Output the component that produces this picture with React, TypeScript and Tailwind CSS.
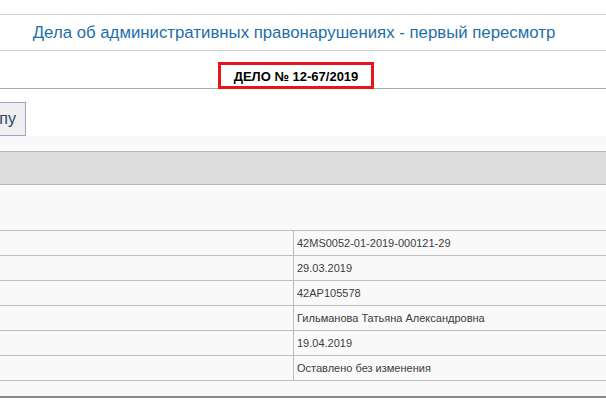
import React from "react";

const rows = [
  "42MS0052-01-2019-000121-29",
  "29.03.2019",
  "42AP105578",
  "Гильманова Татьяна Александровна",
  "19.04.2019",
  "Оставлено без изменения",
];

export default function App() {
  return (
    <div
      className="w-[606px] h-[403px] overflow-hidden bg-white"
      style={{ fontFamily: '"Liberation Sans", Arial, sans-serif' }}
    >
      <div className="h-[15px] border-b border-[#d2d2d2]" />
      <div className="h-[36px] border-b border-[#cfcfcf] flex items-center justify-center pr-[18px] pt-[1px]">
        <span className="text-[16.8px] text-[#1e6fa9] whitespace-nowrap">
          Дела об административных правонарушениях - первый пересмотр
        </span>
      </div>
      <div className="h-[38px] border-b border-[#aaaaaa] flex justify-center pr-[14px]">
        <div className="mt-[11px] h-[27px] w-[156px] border-[3px] border-[#e8141b] bg-white flex items-center justify-center">
          <span className="text-[13px] font-bold text-black whitespace-nowrap pt-[2px]">
            ДЕЛО № 12-67/2019
          </span>
        </div>
      </div>
      <div className="h-[47px] pt-[13px]">
        <div className="h-[34px] w-[26px] border border-l-0 border-[#a3a3c9] bg-[#efefef] flex items-center justify-end pr-[9px]">
          <span className="text-[16px] text-[#2b4766] leading-none">пу</span>
        </div>
      </div>
      <div className="bg-[#f9f9f9] pt-[15px]">
        <div className="h-[34px] border-y border-[#b9b9b9] bg-[#dcdcdc]" />
        <div className="h-[45px]" />
        <div className="border-t border-[#bdbdbd]">
          {rows.map((r) => (
            <div key={r} className="h-[25px] border-b border-[#bdbdbd] flex">
              <div className="w-[294px] border-r border-[#bdbdbd] shrink-0" />
              <div className="pl-[3px] flex items-center text-[11px] text-[#3c3c3c] whitespace-nowrap">
                {r}
              </div>
            </div>
          ))}
          <div className="h-[17px] border-b-2 border-[#8a8a8a]" />
        </div>
      </div>
    </div>
  );
}
